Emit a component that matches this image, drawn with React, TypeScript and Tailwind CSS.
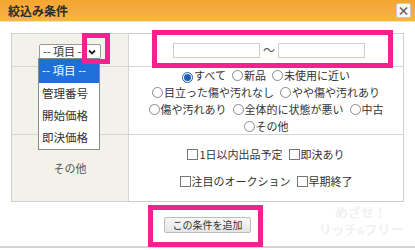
import React from 'react';

const font = { fontFamily: '"Noto Sans CJK JP", "Noto Sans", sans-serif' };

const Radio = ({ checked = false }: { checked?: boolean }) => (
    <span
        className={`mr-[1px] inline-flex h-[11px] w-[11px] items-center justify-center rounded-full border align-[-1px] ${
            checked ? 'border-[#1c5fb5] bg-white' : 'border-[#8a8a8a] bg-white'
        }`}
    >
        {checked && <span className="h-[7px] w-[7px] rounded-full bg-[#1c5fb5]" />}
    </span>
);

const Check = () => (
    <span className="mr-[1px] inline-block h-[11px] w-[11px] border border-[#777] bg-white align-[-1px]" />
);

const Opt = ({ label, checked }: { label: string; checked?: boolean }) => (
    <span className="mx-[3px] whitespace-nowrap">
        <Radio checked={checked} />
        {label}
    </span>
);

const Box = ({ label }: { label: string }) => (
    <span className="mx-[3px] whitespace-nowrap">
        <Check />
        {label}
    </span>
);

const Pink = ({ className }: { className: string }) => (
    <div className={`pointer-events-none absolute border-[5px] border-[#f5218e] ${className}`} />
);

const App = () => {
    return (
        <div className="relative h-[250px] w-[415px] overflow-hidden bg-white text-[#333]" style={font}>
            <div className="flex h-[22px] items-center justify-between border-b border-[#e3e3e3] bg-gradient-to-b from-[#f4a530] to-[#f7b44a] pl-[8px] pr-[4px]">
                <span className="text-[12px] font-bold text-[#2b2b2b]">絞込み条件</span>
                <button className="flex h-[15px] w-[15px] items-center justify-center rounded-[2px] border border-[#c9c9c9] bg-[#f7f7f7] text-[12px] font-bold leading-none text-[#555]">
                    ×
                </button>
            </div>

            <div className="px-[11px] pt-[11px]">
                <div className="grid grid-cols-[117px_1fr] border border-[#cfcfcf] text-[11px]">
                    <div className="flex h-[33px] items-center justify-center border-b border-r border-[#d6d6d6] bg-[#f2f2ea]">
                        <div className="mt-[3px] flex h-[15px] w-[62px] items-center justify-between rounded-[2px] border border-[#9a9a9a] bg-white pl-[3px] pr-[4px] text-[11px] leading-none">
                            <span>-- 項目 --</span>
                            <svg width="8" height="6" viewBox="0 0 8 6">
                                <path d="M1 1.5 L4 4.5 L7 1.5" stroke="#222" strokeWidth="1.8" fill="none" />
                            </svg>
                        </div>
                    </div>
                    <div className="flex h-[33px] items-center justify-center border-b border-[#d6d6d6]">
                        <div className="ml-[6px] flex items-center gap-[2px]">
                            <div className="h-[15px] w-[87px] border border-[#cfcfcf] bg-white" />
                            <span className="px-[1px] text-[12px] text-[#555]">〜</span>
                            <div className="h-[15px] w-[87px] border border-[#cfcfcf] bg-white" />
                        </div>
                    </div>

                    <div className="h-[68px] border-b border-r border-[#d6d6d6] bg-[#f2f2ea]" />
                    <div className="flex h-[68px] flex-col items-center justify-center border-b border-[#d6d6d6] leading-[17px]">
                        <div>
                            <Opt label="すべて" checked />
                            <Opt label="新品" />
                            <Opt label="未使用に近い" />
                        </div>
                        <div>
                            <Opt label="目立った傷や汚れなし" />
                            <Opt label="やや傷や汚れあり" />
                        </div>
                        <div>
                            <Opt label="傷や汚れあり" />
                            <Opt label="全体的に状態が悪い" />
                            <Opt label="中古" />
                        </div>
                        <div>
                            <Opt label="その他" />
                        </div>
                    </div>

                    <div className="flex h-[66px] items-center justify-center border-r border-[#d6d6d6] bg-[#f2f2ea] pt-[1px] text-[#555]">
                        その他
                    </div>
                    <div className="flex h-[66px] flex-col items-center justify-center gap-[10px] leading-[17px]">
                        <div>
                            <Box label="1日以内出品予定" />
                            <Box label="即決あり" />
                        </div>
                        <div>
                            <Box label="注目のオークション" />
                            <Box label="早期終了" />
                        </div>
                    </div>
                </div>

                <div className="flex justify-center pt-[15px]">
                    <button className="h-[16px] w-[87px] rounded-[2px] border border-[#bdbdbd] bg-gradient-to-b from-[#f7f7f7] to-[#e6e6e6] text-[10px] leading-none text-[#333]">
                        この条件を追加
                    </button>
                </div>
            </div>

            <div className="absolute bottom-[2px] left-0 h-[2px] w-full bg-[#d4d4d4]" />

            <div className="absolute left-[318px] top-[203px] flex w-[86px] flex-col items-center text-[13px] font-bold leading-[17px] text-[#f1f1f1]">
                <span>めざせ！</span>
                <span className="whitespace-nowrap">リッチ<span className="text-[9px]">&</span>フリー</span>
            </div>

            <div className="absolute left-[38px] top-[58px] w-[62px] border border-[#8a8a8a] bg-white text-[11.5px]">
                <div className="flex h-[24px] items-center bg-[#1e6fd9] pl-[3px] text-white">-- 項目 --</div>
                <div className="flex h-[22px] items-center pl-[3px]">管理番号</div>
                <div className="flex h-[22px] items-center pl-[3px]">開始価格</div>
                <div className="flex h-[22px] items-center pl-[3px]">即決価格</div>
            </div>

            <Pink className="left-[82px] top-[33px] h-[31px] w-[28px]" />
            <Pink className="left-[152px] top-[30px] h-[38px] w-[241px]" />
            <Pink className="left-[148px] top-[205px] h-[42px] w-[115px]" />
        </div>
    );
};

export default App;
